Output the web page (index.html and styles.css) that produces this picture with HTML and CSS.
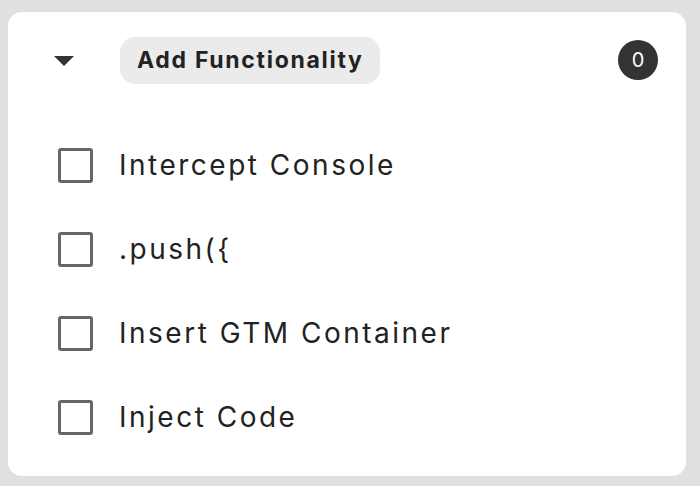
FILE: index.html
```html
<!DOCTYPE html>
<html>
<head>
<meta charset="utf-8">
<link rel="stylesheet" href="styles.css">
</head>
<body>
<div class="card">
  <div class="header">
    <span class="caret">
      <svg width="48" height="48" viewBox="0 0 24 24"><path d="M7 10l5 5 5-5z" fill="#333"/></svg>
    </span>
    <span class="pill">Add Functionality</span>
    <span class="spacer"></span>
    <span class="badge">0</span>
  </div>
  <ul class="list">
    <li class="row"><span class="box"></span><span class="label">Intercept Console</span></li>
    <li class="row"><span class="box"></span><span class="label">.push({</span></li>
    <li class="row"><span class="box"></span><span class="label">Insert GTM Container</span></li>
    <li class="row"><span class="box"></span><span class="label">Inject Code</span></li>
  </ul>
</div>
</body>
</html>
```
FILE: styles.css
```css
html, body {
  margin: 0;
  background: #e0e0e0;
}
body {
  padding: 12px 14px 10px 8px;
  font-family: Inter, "Open Sans", sans-serif;
  color: #222;
}
.card {
  background: #fff;
  border-radius: 14px;
  height: 464px;
  box-sizing: border-box;
  padding: 24px 28px 17px 32px;
}
.header {
  display: flex;
  align-items: center;
  height: 48px;
}
.caret {
  width: 48px;
  height: 48px;
  display: flex;
}
.pill {
  margin-left: 32px;
  height: 47px;
  box-sizing: border-box;
  padding: 0 16px 0 17px;
  display: flex;
  align-items: center;
  background: #ebebeb;
  border-radius: 15px;
  font-size: 23px;
  font-weight: 700;
  letter-spacing: 1.7px;
  color: #222;
}
.spacer { flex: 1; }
.badge {
  width: 40px;
  height: 40px;
  border-radius: 50%;
  background: #333;
  color: #fff;
  display: flex;
  align-items: center;
  justify-content: center;
  font-size: 20px;
}
.list {
  list-style: none;
  margin: 39px 0 0;
  padding: 0;
}
.row {
  height: 84px;
  display: flex;
  align-items: center;
  padding-left: 18px;
}
.box {
  width: 35px;
  height: 35px;
  box-sizing: border-box;
  border: 3px solid #666;
  border-radius: 3px;
  margin-right: 26px;
}
.label {
  font-size: 28px;
  letter-spacing: 2.5px;
  color: #222;
}
```
